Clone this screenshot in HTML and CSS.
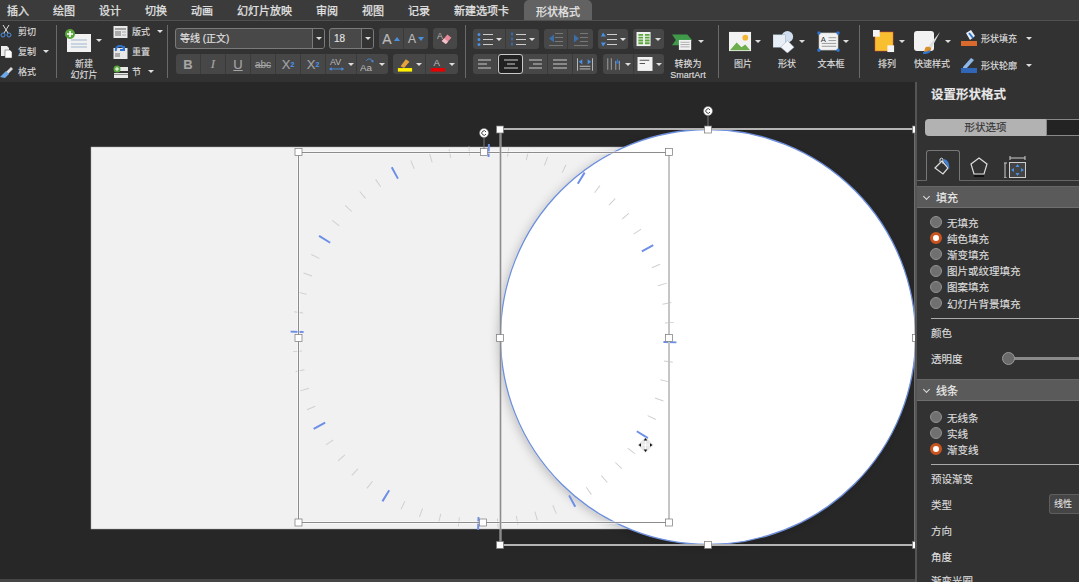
FILE: index.html
```html
<!DOCTYPE html>
<html lang="zh-CN">
<head>
    <meta charset="UTF-8">
    <meta name="viewport" content="width=device-width, initial-scale=1.0">
    <title>形状格式</title>
    <link rel="stylesheet" href="styles.css">
</head>
<body>
<div class="app">

    <nav class="tabs">
        <span>插入</span><span>绘图</span><span>设计</span><span>切换</span><span>动画</span><span>幻灯片放映</span><span>审阅</span><span>视图</span><span>记录</span><span>新建选项卡</span>
        <span class="tab-active">形状格式</span>
    </nav>

    <div class="ribbon">
        <!-- clipboard -->
        <div class="stack clip">
            <div class="stack-row"><svg class="i14" viewBox="0 0 14 14"><path d="M3 0l5 8M9 0L4 8" stroke="#ddd" fill="none"/><circle cx="3" cy="10" r="2" fill="none" stroke="#4a90e2"/><circle cx="9" cy="10" r="2" fill="none" stroke="#4a90e2"/></svg>剪切</div>
            <div class="stack-row"><svg class="i14" viewBox="0 0 14 14"><path d="M1 1h6l2 2v8H1z" fill="#eee"/><path d="M5 5h5l2 2v6H5z" fill="#fff" stroke="#444" stroke-width=".5"/></svg>复制<i class="caret"></i></div>
            <div class="stack-row"><svg class="i14" viewBox="0 0 14 14"><path d="M6 7l5-5 2 2-5 5z" fill="#ddd"/><path d="M6 6l3 3-4 4-5-1z" fill="#6fa8e8"/></svg>格式</div>
        </div>
        <i class="sep"></i>

        <!-- slides -->
        <div class="big new-slide">
            <div class="big-icon">
                <svg class="i-slide" viewBox="0 0 28 23"><rect x="2" y="5" width="24" height="18" fill="#f2f2f2"/><path d="M6 11h16M6 15h16M6 18h16" stroke="#9fb5cf"/><circle cx="5" cy="5" r="5" fill="#5aa83c"/><path d="M5 2v6M2 5h6" stroke="#fff" stroke-width="1.6"/></svg>
                <i class="caret"></i>
            </div>
            <div class="big-label">新建<br>幻灯片</div>
        </div>
        <div class="stack slide-opts">
            <div class="stack-row"><svg class="i14w" viewBox="0 0 15 14"><rect x=".5" y="1" width="14" height="12" fill="#e8e8e8"/><path d="M2 4h11" stroke="#8a8a8a" stroke-width="1.5"/><rect x="2" y="6" width="6" height="5" fill="#aaa"/><path d="M9 7h4M9 10h4" stroke="#aaa"/></svg>版式<i class="caret"></i></div>
            <div class="stack-row"><svg class="i14w" viewBox="0 0 15 14"><rect x=".5" y="3" width="14" height="11" fill="#e8e8e8"/><rect x="2" y="8" width="5" height="4" fill="#aaa"/><path d="M3 6a4 4 0 0 1 8-2M11 1v4H7" fill="none" stroke="#2f74d0" stroke-width="2"/></svg>重置</div>
            <div class="stack-row"><svg class="i14w" viewBox="0 0 15 14"><path d="M1 2h14v4H1z" fill="#e8e8e8"/><path d="M1 8h14v5H1z" fill="#e8e8e8"/><path d="M1 9.500h14" stroke="#888"/><circle cx="4" cy="4" r="3.500" fill="#5aa83c"/><path d="M4 2v4M2 4h4" stroke="#fff"/></svg>节<i class="caret"></i></div>
        </div>
        <i class="sep"></i>

        <!-- font -->
        <div class="rows font-group">
            <div class="row-top">
                <div class="combo combo-font"><span>等线 (正文)</span><b><i class="caret"></i></b></div>
                <div class="combo combo-size"><span>18</span><b><i class="caret"></i></b></div>
                <div class="btns">
                    <span class="btn w25 letter">A<em class="arrow-up"></em></span>
                    <span class="btn w24 letter small">A<em class="arrow-down"></em></span>
                </div>
                <div class="btns">
                    <span class="btn w24"><svg class="i16" viewBox="0 0 20 16"><text x="0" y="9" class="svg-a">A</text><path d="M6 11l7-8 5 4-7 8z" fill="#e88a9a"/><path d="M6 11l3-3 5 4-3 3z" fill="#f2c2ca"/></svg></span>
                </div>
            </div>
            <div class="row-bottom row-font">
                <div class="btns">
                    <span class="btn w25 fmt"><b>B</b></span>
                    <span class="btn w25 fmt"><i class="serif">I</i></span>
                    <span class="btn w25 fmt"><u>U</u></span>
                    <span class="btn w25 fmt"><s class="strike">abc</s></span>
                    <span class="btn w25 fmt">X<sup>2</sup></span>
                    <span class="btn w25 fmt">X<sub>2</sub></span>
                    <span class="btn w31 fmt"><svg class="i16" viewBox="0 0 18 16"><text x="1" y="9" class="svg-a svg-av">AV</text><path d="M1 13h15" stroke="#4a90e2"/><path d="M0 13l3-2v4zM17 13l-3-2v4z" fill="#4a90e2"/></svg><i class="caret"></i></span>
                    <span class="btn w31 fmt"><svg class="i16" viewBox="0 0 18 16"><text x="0" y="15" class="svg-a">Aa</text><path d="M7 4c2-3 5-3 7 0" fill="none" stroke="#4a90e2"/><path d="M15 6l-3-2 3-1z" fill="#4a90e2"/></svg><i class="caret"></i></span>
                </div>
                <div class="btns">
                    <span class="btn w33"><svg class="i16" viewBox="0 0 18 16"><path d="M4 10l6-8 4 3-6 7z" fill="#e8a23c"/><rect x="1" y="12" width="16" height="4" fill="#ffef00"/></svg><i class="caret"></i></span>
                    <span class="btn w32"><svg class="i16" viewBox="0 0 18 16"><text x="4" y="10" class="svg-a">A</text><rect x="1" y="12" width="16" height="4" fill="#e80000"/></svg><i class="caret"></i></span>
                </div>
            </div>
        </div>
        <i class="sep"></i>

        <!-- paragraph -->
        <div class="rows para-group">
            <div class="row-top">
                <div class="btns">
                    <span class="btn w33"><svg class="i16" viewBox="0 0 16 14"><use href="#list-lines"/><path d="M2 2v.1M2 7v.1M2 12v.1" stroke="#4a90e2" stroke-width="3" stroke-linecap="round"/></svg><i class="caret"></i></span>
                    <span class="btn w33"><svg class="i16" viewBox="0 0 16 14"><use href="#list-lines"/><path d="M2 0v14" stroke="#2f74d0" stroke-width="1.500" stroke-dasharray="3 2"/></svg><i class="caret"></i></span>
                </div>
                <div class="btns">
                    <span class="btn w24"><svg class="i16" viewBox="0 0 16 14"><path d="M7 1h8M7 5h8M7 9h8M1 13h14" stroke="#777"/><path d="M1 6l5-4v8z" fill="#3a6fa8"/></svg></span>
                    <span class="btn w25"><svg class="i16" viewBox="0 0 16 14"><path d="M7 1h8M7 5h8M7 9h8M1 13h14" stroke="#777"/><path d="M6 6L1 2v8z" fill="#3a6fa8"/></svg></span>
                </div>
                <div class="btns">
                    <span class="btn w30"><svg class="i16" viewBox="0 0 16 14"><use href="#list-lines"/><path d="M2 0l3 4H0zM2 14l3-4H0z" fill="#4a90e2"/></svg><i class="caret"></i></span>
                </div>
                <div class="btns">
                    <span class="btn w31"><svg class="i16" viewBox="0 0 16 16"><rect width="15" height="15" fill="#f2f2f2"/><path d="M2 3h5M2 6h5M2 9h5M2 12h5M9 3h5M9 6h5M9 9h5M9 12h5" stroke="#5aa83c" stroke-width="2"/></svg><i class="caret"></i></span>
                </div>
            </div>
            <div class="row-bottom row-para">
                <div class="btns">
                    <span class="btn w25"><svg class="i14" viewBox="0 0 14 12"><path d="M0 2h13M0 6h9M0 10h13" stroke="#ccc"/></svg></span>
                    <span class="btn w25 btn-on"><svg class="i14" viewBox="0 0 14 12"><path d="M0 2h14M3 6h8M0 10h14" stroke="#ccc"/></svg></span>
                    <span class="btn w25"><svg class="i14" viewBox="0 0 14 12"><path d="M1 2h13M5 6h9M1 10h13" stroke="#ccc"/></svg></span>
                    <span class="btn w25"><svg class="i14" viewBox="0 0 14 12"><path d="M0 2h14M0 6h14M0 10h14" stroke="#ccc"/></svg></span>
                    <span class="btn w24"><svg class="i16" viewBox="0 0 18 14"><path d="M.5 0v14M17.500 0v14M3 9h12M3 12h12" stroke="#ccc"/><path d="M2 4l4-3v6zM16 4l-4-3v6z" fill="#4a90e2"/></svg></span>
                </div>
                <div class="btns">
                    <span class="btn w31"><svg class="i16" viewBox="0 0 18 16"><path d="M2 1v13M6 1v13M11 4v10M15 4v10" stroke="#aaa"/><path d="M11 7l2-6 2 6z" fill="#2f74d0"/></svg><i class="caret"></i></span>
                    <span class="btn w30"><svg class="i16" viewBox="0 0 14 14"><rect width="14" height="13" fill="#f2f2f2"/><path d="M2 3h9M2 6h5" stroke="#555"/></svg><i class="caret"></i></span>
                </div>
            </div>
        </div>
        <div class="big smartart">
            <div class="big-icon">
                <svg class="i-big" viewBox="0 0 30 24"><path d="M0 3h20l6 7-6 7H0l5-7z" fill="#3f9a4a"/><rect x="9" y="10" width="16" height="13" fill="#f2f2f2"/><path d="M11 13h12M11 16h12M11 19h12" stroke="#999"/></svg>
                <i class="caret"></i>
            </div>
            <div class="big-label">转换为<br>SmartArt</div>
        </div>
        <i class="sep sep-para"></i>

        <!-- insert -->
        <div class="big">
            <div class="big-icon">
                <svg class="i-big" viewBox="0 0 24 24"><rect y="2" width="23" height="20" fill="#f2f2f2"/><path d="M1 21l7-8 5 5 4-3 5 6z" fill="#6cae4c"/><circle cx="17" cy="8" r="3" fill="#f2b632"/></svg>
                <i class="caret"></i>
            </div>
            <div class="big-label">图片</div>
        </div>
        <div class="big">
            <div class="big-icon">
                <svg class="i-big" viewBox="0 0 24 24"><circle cx="15" cy="7" r="6" fill="#cfdff0"/><rect y="5" width="13" height="13" fill="#e8eef6" stroke="#9ab" stroke-width=".5"/><path d="M15 11l7 7-7 6-7-6z" fill="#f2f6fb" stroke="#9ab" stroke-width=".5"/></svg>
                <i class="caret"></i>
            </div>
            <div class="big-label">形状</div>
        </div>
        <div class="big">
            <div class="big-icon">
                <svg class="i-big" viewBox="0 0 24 24"><rect x="2" y="3" width="20" height="18" fill="#f2f2f2" stroke="#999" stroke-width=".5"/><text x="4" y="12" class="svg-a svg-dark">A</text><path d="M12 8h8M12 11h8M5 14h15M5 17h15" stroke="#999"/><path d="M2 3v.1M22 3v.1M2 21v.1M22 21v.1" stroke="#2f74d0" stroke-width="3.500" stroke-linecap="round"/></svg>
                <i class="caret"></i>
            </div>
            <div class="big-label">文本框</div>
        </div>
        <i class="sep sep-insert"></i>

        <!-- shape styles -->
        <div class="big">
            <div class="big-icon">
                <svg class="i-big" viewBox="0 0 24 24"><rect x="2" y="2" width="19" height="20" fill="#f8c030" stroke="#b33" stroke-width=".5"/><rect y="0" width="7" height="7" fill="#f4f4f4"/><rect x="15" y="16" width="7" height="7" fill="#f4f4f4"/></svg>
                <i class="caret"></i>
            </div>
            <div class="big-label">排列</div>
        </div>
        <div class="big style-big">
            <div class="big-icon">
                <svg class="i-style" viewBox="0 0 28 24"><rect y="1" width="20" height="20" rx="3" fill="#f2f2f2"/><path d="M26 2L14 17l3 2z" fill="#ddd"/><path d="M12 17c3-1 6 0 5 3-2 3-6 3-8 3 2-1 1-4 3-6z" fill="#d99028"/><path d="M9 23c3 0 5 0 7-2" stroke="#2f74d0" stroke-width="2" fill="none"/></svg>
                <i class="caret"></i>
            </div>
            <div class="big-label">快速样式</div>
        </div>
        <div class="stack shape-opts">
            <div class="stack-row tall"><svg class="i16w" viewBox="0 0 16 16"><path d="M5 3l5-3 4 6-5 4z" fill="#e8eef6"/><path d="M8 3l4 5" stroke="#2f74d0" stroke-width="2"/><rect y="11" width="16" height="5" fill="#d9692c"/></svg>形状填充<i class="caret caret-far"></i></div>
            <div class="stack-row tall"><svg class="i16w" viewBox="0 0 16 16"><path d="M2 10l8-9 3 2-8 9-3 1z" fill="#8fb8ea"/><rect y="11" width="16" height="5" fill="#2f66b8"/></svg>形状轮廓<i class="caret caret-far"></i></div>
        </div>
    </div>

    <div class="workspace">
        <div class="canvas">
            <svg class="slide" viewBox="0 82 915 500">
                <defs>
                    <filter id="soft" x="-10%" y="-10%" width="120%" height="120%"><feDropShadow dx="-2" dy="2" stdDeviation="5" flood-opacity=".2"/></filter>
                    <g id="list-lines"><path d="M6 2h10M6 7h10M6 12h10" stroke="#ccc" stroke-width="1.200"/></g>
                    <rect id="h" x="-3.500" y="-3.500" width="7" height="7" fill="#fff" stroke="#777" stroke-width=".7"/>
                    <g id="rot"><circle r="4.500" fill="#fff" stroke="#777" stroke-width=".5"/><path d="M2 -1a2.200 2.200 0 1 0 0 2" fill="none" stroke="#444"/></g>
                </defs>

                <rect x="91" y="147" width="690" height="382" fill="#f1f1f1" stroke="#aaa" stroke-width=".5"/>
                <circle cx="708" cy="337" r="207.500" fill="#fff" stroke="#6d8fdc" stroke-width="1.300" filter="url(#soft)"/>

                <!-- clock face: one dash per minute -->
                <g transform="rotate(1.6 483.500 337)" fill="none">
                    <circle cx="483.500" cy="337" r="186.500" stroke="#cfcfcf" stroke-width="9" pathLength="360" stroke-dasharray=".3 5.700" stroke-dashoffset=".15"/>
                    <circle cx="483.500" cy="337" r="186.500" stroke="#6d8fe8" stroke-width="13" pathLength="360" stroke-dasharray=".6 29.400" stroke-dashoffset=".3"/>
                </g>

                <!-- selection of the clock -->
                <g fill="none">
                    <rect x="298.500" y="152.500" width="370.500" height="370" stroke="#fff" stroke-width="2"/>
                    <rect x="298.500" y="152.500" width="370.500" height="370" stroke="#8c8c8c"/>
                    <path d="M484 152v-15" stroke="#777"/>
                </g>
                <use href="#rot" x="484" y="133"/>
                <use href="#h" x="298.500" y="152"/><use href="#h" x="484" y="152"/><use href="#h" x="669" y="152"/>
                <use href="#h" x="298.500" y="338"/><use href="#h" x="669" y="338"/>
                <use href="#h" x="298.500" y="522.500"/><use href="#h" x="483" y="522.500"/><use href="#h" x="669" y="522.500"/>

                <!-- selection of the circle -->
                <g fill="none">
                    <rect x="500.500" y="129" width="415" height="416" stroke="#b5b5b5" stroke-width="2"/>
                    <path d="M500.500 129v416" stroke="#8c8c8c"/>
                    <path d="M708 129v-14" stroke="#777"/>
                </g>
                <use href="#rot" x="708" y="111"/>
                <use href="#h" x="500" y="129.500"/><use href="#h" x="708" y="129.500"/>
                <use href="#h" x="500" y="338"/><use href="#h" x="916" y="338"/>
                <use href="#h" x="500" y="545"/><use href="#h" x="708" y="545"/>
                <use href="#h" x="916" y="129.500"/><use href="#h" x="916" y="545"/>

                <!-- move cursor -->
                <g transform="translate(645.500 445)">
                    <path d="M0 -8L8 0 0 8-8 0z" fill="#ddd" opacity=".7"/>
                    <path d="M0 -6.500v13M-6.500 0h13" stroke="#fff" stroke-width=".8"/>
                    <path d="M0 -7l1.800 2.500h-3.600zM0 7l1.800-2.500h-3.600zM-7 0l2.500 1.800v-3.600zM7 0l-2.500 1.800v-3.600z" fill="#111"/>
                </g>
            </svg>
        </div>

        <aside class="panel">
            <h2 class="panel-title">设置形状格式</h2>
            <div class="segments">
                <span class="seg-on">形状选项</span>
                <span class="seg-off"></span>
            </div>
            <div class="panel-tabs">
                <span class="ptab ptab-on"><svg class="i22" viewBox="0 0 22 22"><path d="M3 12l7-7 6 7-5 6z" fill="none" stroke="#ddd" stroke-width="1.200"/><path d="M8 6V3a2 2 0 0 1 3 0v5" fill="none" stroke="#ddd"/><path d="M11 3c5 0 7 5 6 11-1-3-2-6-5-8z" fill="#3f7fd6"/></svg></span>
                <span class="ptab"><svg class="i22" viewBox="0 0 22 22"><path d="M11 2l8 6-3 10H6L3 8z" fill="none" stroke="#ddd" stroke-width="1.200"/><path d="M6 20h10" stroke="#111" stroke-width="2"/></svg></span>
                <span class="ptab"><svg class="i22" viewBox="0 0 22 22"><path d="M1 7v15M0 7h3M0 22h3M6 2h15M6 0v4M21 0v4" stroke="#ccc"/><rect x="5.500" y="6.500" width="16" height="15" fill="#444" stroke="#ccc"/><path d="M13.500 8l2 3h-4zM13.500 20l2-3h-4zM7 14l3-2v4zM20 14l-3-2v4z" fill="#4a90e2"/></svg></span>
            </div>

            <div class="sec-head"><i class="chev"></i>填充</div>
            <ul class="radios">
                <li><i class="radio"></i>无填充</li>
                <li><i class="radio radio-on"></i>纯色填充</li>
                <li><i class="radio"></i>渐变填充</li>
                <li><i class="radio"></i>图片或纹理填充</li>
                <li><i class="radio"></i>图案填充</li>
                <li><i class="radio"></i>幻灯片背景填充</li>
            </ul>
            <hr class="rule">
            <div class="prop">颜色</div>
            <div class="prop">透明度<span class="slider"><i class="knob"></i></span></div>

            <div class="sec-head sec-line"><i class="chev"></i>线条</div>
            <ul class="radios radios-line">
                <li><i class="radio"></i>无线条</li>
                <li><i class="radio"></i>实线</li>
                <li><i class="radio radio-on"></i>渐变线</li>
            </ul>
            <hr class="rule">
            <div class="prop">预设渐变</div>
            <div class="prop">类型<span class="select">线性</span></div>
            <div class="prop">方向</div>
            <div class="prop">角度</div>
            <div class="prop prop-cut">渐变光圈</div>
        </aside>
    </div>
</div>
</body>
</html>
```

FILE: styles.css
```css
* {
    box-sizing: border-box;
}

html,
body {
    margin: 0;
    height: 100%;
    overflow: hidden;
}

body {
    font-family: "Liberation Sans", "Noto Sans CJK SC", sans-serif;
    font-size: 9px;
    color: #ddd;
    background: #272727;
    -webkit-text-stroke: .15px;
}

.app {
    display: flex;
    flex-direction: column;
    width: 1079px;
    height: 582px;
}

/* tab row */
.tabs {
    display: flex;
    align-items: center;
    gap: 24px;
    height: 21px;
    padding-left: 7px;
    font-size: 11px;
    color: #e6e6e6;
    background: #3b3b3b;
    border-bottom: 1px solid #505050;
    -webkit-text-stroke: .25px;
}

.tab-active {
    height: 20px;
    margin: 0 0 0 -9px;
    padding: 3px 12px 0;
    background: #626262;
    border-radius: 5px 5px 0 0;
}

/* ribbon */
.ribbon {
    display: flex;
    height: 61px;
    background: #323232;
    flex-shrink: 0;
}

.sep {
    width: 1px;
    height: 53px;
    margin-top: 4px;
    background: #6a6a6a;
    flex-shrink: 0;
}

.stack {
    display: flex;
    flex-direction: column;
    justify-content: center;
    height: 61px;
    flex-shrink: 0;
}

.stack-row {
    display: flex;
    align-items: center;
    height: 20px;
    gap: 4px;
    white-space: nowrap;
}

.stack-row.tall {
    height: 27px;
}

.clip {
    width: 56px;
}

.slide-opts {
    width: 54px;
    margin-left: 2px;
}

.shape-opts {
    margin-left: 6px;
}

.caret {
    display: inline-block;
    width: 0;
    height: 0;
    margin-left: 3px;
    border-left: 3px solid transparent;
    border-right: 3px solid transparent;
    border-top: 3.500px solid #ddd;
}

.caret-far {
    margin-left: 5px;
}

.big {
    display: flex;
    flex-direction: column;
    width: 44px;
    flex-shrink: 0;
}

.big-icon {
    display: flex;
    align-items: center;
    height: 37px;
    padding: 4px 0 0 8px;
}

.big-label {
    margin-top: 1px;
    line-height: 11px;
    text-align: center;
    white-space: nowrap;
}

.new-slide {
    width: 54px;
}

.new-slide .big-icon {
    padding-top: 1px;
}

.smartart {
    margin-right: 8px;
}

.smartart .big-icon {
    padding-left: 6px;
}

.style-big {
    width: 46px;
}

.style-big .big-icon {
    padding-left: 5px;
}

.sep-para {
    margin-right: 2px;
}

.sep-insert {
    margin-left: 6px;
    margin-right: 5px;
}

/* small icons */
.i14 { width: 14px; height: 14px; flex-shrink: 0; }
.i14w { width: 15px; height: 14px; flex-shrink: 0; }
.i16 { width: 16px; height: 15px; flex-shrink: 0; }
.i16w { width: 16px; height: 16px; flex-shrink: 0; }
.i22 { width: 22px; height: 22px; }
.i-slide { width: 28px; height: 23px; flex-shrink: 0; }
.i-big { width: 23px; height: 23px; flex-shrink: 0; }
.i-style { width: 28px; height: 24px; flex-shrink: 0; }

.svg-a {
    font-size: 11px;
    fill: #bbb;
}

.svg-dark {
    font-size: 8px;
    fill: #333;
}

.svg-av {
    font-size: 10px;
}

/* button rows */
.rows {
    display: flex;
    flex-direction: column;
    gap: 5px;
    padding-top: 7px;
    flex-shrink: 0;
}

.font-group {
    width: 297px;
    padding-left: 7px;
}

.para-group {
    width: 200px;
    padding-left: 7px;
    padding-top: 8px;
}

.para-group .row-top {
    height: 20px;
}

.row-top,
.row-bottom {
    display: flex;
    gap: 5px;
}

.row-top {
    height: 21px;
}

.row-bottom {
    height: 20px;
}

.row-font {
    padding-left: 1px;
}

.row-para {
    gap: 6px;
}

.combo {
    display: flex;
    height: 21px;
    border: 1px solid #7a7a7a;
    border-radius: 3px;
    background: #484848;
    font-size: 10px;
    line-height: 19px;
    color: #e2e2e2;
}

.combo span {
    flex: 1;
    padding-left: 4px;
}

.combo b {
    display: flex;
    align-items: center;
    justify-content: center;
    width: 12px;
    background: #333;
    border-left: 1px solid #7a7a7a;
    border-radius: 0 2px 2px 0;
}

.combo .caret {
    margin: 0;
}

.combo-font {
    width: 150px;
    margin-right: -1px;
}

.combo-size {
    width: 45px;
}

.btns {
    display: flex;
    background: #474747;
    border-radius: 3px;
}

.btn {
    display: flex;
    align-items: center;
    justify-content: center;
    height: 100%;
    border-right: 1px solid #3a3a3a;
    font-size: 12px;
    color: #a5a5a5;
}

.btn:last-child {
    border-right: 0;
}

.w24 { width: 24px; }
.w25 { width: 25px; }
.w30 { width: 30px; }
.w31 { width: 31px; }
.w32 { width: 32px; }
.w33 { width: 33px; }

.btn-on {
    background: #222;
    border: 1px solid #c9c9c9;
    border-radius: 3px;
}

.fmt {
    font-size: 13px;
}

.fmt sup,
.fmt sub {
    font-size: 7px;
    color: #4a90e2;
    font-weight: bold;
}

.strike {
    font-size: 10px;
}

.serif {
    font-family: "Liberation Serif", serif;
    font-size: 13px;
}

.letter {
    font-size: 14px;
    color: #bbb;
}

.letter.small {
    font-size: 12px;
}

.arrow-up,
.arrow-down {
    width: 0;
    height: 0;
    margin-left: 2px;
    border-left: 3.500px solid transparent;
    border-right: 3.500px solid transparent;
}

.arrow-up {
    border-bottom: 4px solid #4a90e2;
}

.arrow-down {
    border-top: 4px solid #4a90e2;
}

/* canvas */
.workspace {
    display: flex;
    flex: 1;
    min-height: 0;
}

.canvas {
    width: 915px;
    flex-shrink: 0;
    overflow: hidden;
    background: #272727;
    border-bottom: 3px solid #454545;
}

.slide {
    display: block;
    width: 915px;
    height: 500px;
}

/* side panel */
.panel {
    flex: 1;
    overflow: hidden;
    background: #323232;
    border-left: 2px solid #555;
    font-size: 10.500px;
}

.panel-title {
    margin: 0;
    height: 26px;
    padding-left: 14px;
    font-size: 12.500px;
    line-height: 26px;
    font-weight: bold;
    color: #e8e8e8;
}

.segments {
    display: flex;
    height: 17px;
    margin: 11px 0 0 8px;
    line-height: 17px;
}

.seg-on {
    width: 121px;
    text-align: center;
    color: #333;
    background: #b2b2b2;
    border-radius: 4px 0 0 4px;
}

.seg-off {
    flex: 1;
    background: #232323;
    border: 1px solid #888;
    border-right: 0;
}

.panel-tabs {
    display: flex;
    gap: 2px;
    height: 31px;
    margin-top: 14px;
    padding-left: 9px;
    border-bottom: 1px solid #666;
}

.ptab {
    display: flex;
    align-items: center;
    justify-content: center;
    width: 34px;
    height: 31px;
    padding-top: 2px;
}

.ptab-on {
    border: 1px solid #777;
    border-bottom: 1px solid #323232;
    border-radius: 3px 3px 0 0;
}

.sec-head {
    display: flex;
    align-items: center;
    height: 22px;
    margin-top: 5px;
    padding-left: 6px;
    background: #5a5a5a;
    border-top: 1px solid #666;
    border-bottom: 1px solid #6e6e6e;
    font-size: 11px;
    color: #eee;
}

.sec-line {
    margin-top: 8px;
}

.chev {
    width: 5px;
    height: 5px;
    margin: -2px 7px 0 1px;
    border-right: 1px solid #ddd;
    border-bottom: 1px solid #ddd;
    transform: rotate(45deg);
}

.radios {
    list-style: none;
    margin: 0;
    padding: 6px 0 0 13px;
}

.radios-line {
    padding-top: 8px;
}

.radios li {
    display: flex;
    align-items: center;
    gap: 5px;
    height: 16.200px;
    color: #ddd;
}

.radios-line li {
    height: 16px;
}

.radio {
    width: 12px;
    height: 12px;
    border-radius: 50%;
    background: #707070;
    border: 1px solid #929292;
}

.radio-on {
    background: #fff;
    border: 3px solid #c9541f;
}

.rule {
    height: 1px;
    margin: 7px 0 0 14px;
    border: 0;
    background: #aaa;
}

.prop {
    display: flex;
    align-items: center;
    height: 26px;
    padding-left: 14px;
}

.prop-cut {
    height: 16px;
    align-items: flex-start;
    padding-top: 6px;
    line-height: 12px;
}

.slider {
    height: 3px;
    margin-left: 40px;
    flex: 1;
    display: flex;
    align-items: center;
    background: #8a8a8a;
}

.knob {
    width: 13px;
    height: 13px;
    margin-left: -1px;
    border-radius: 50%;
    background: #6a6a6a;
    border: 1px solid #999;
}

.select {
    height: 20px;
    margin-left: auto;
    width: 30px;
    padding-left: 4px;
    border: 1px solid #5e5e5e;
    border-right: 0;
    border-radius: 3px 0 0 3px;
    background: #454545;
    font-size: 9px;
    line-height: 18px;
}
```
